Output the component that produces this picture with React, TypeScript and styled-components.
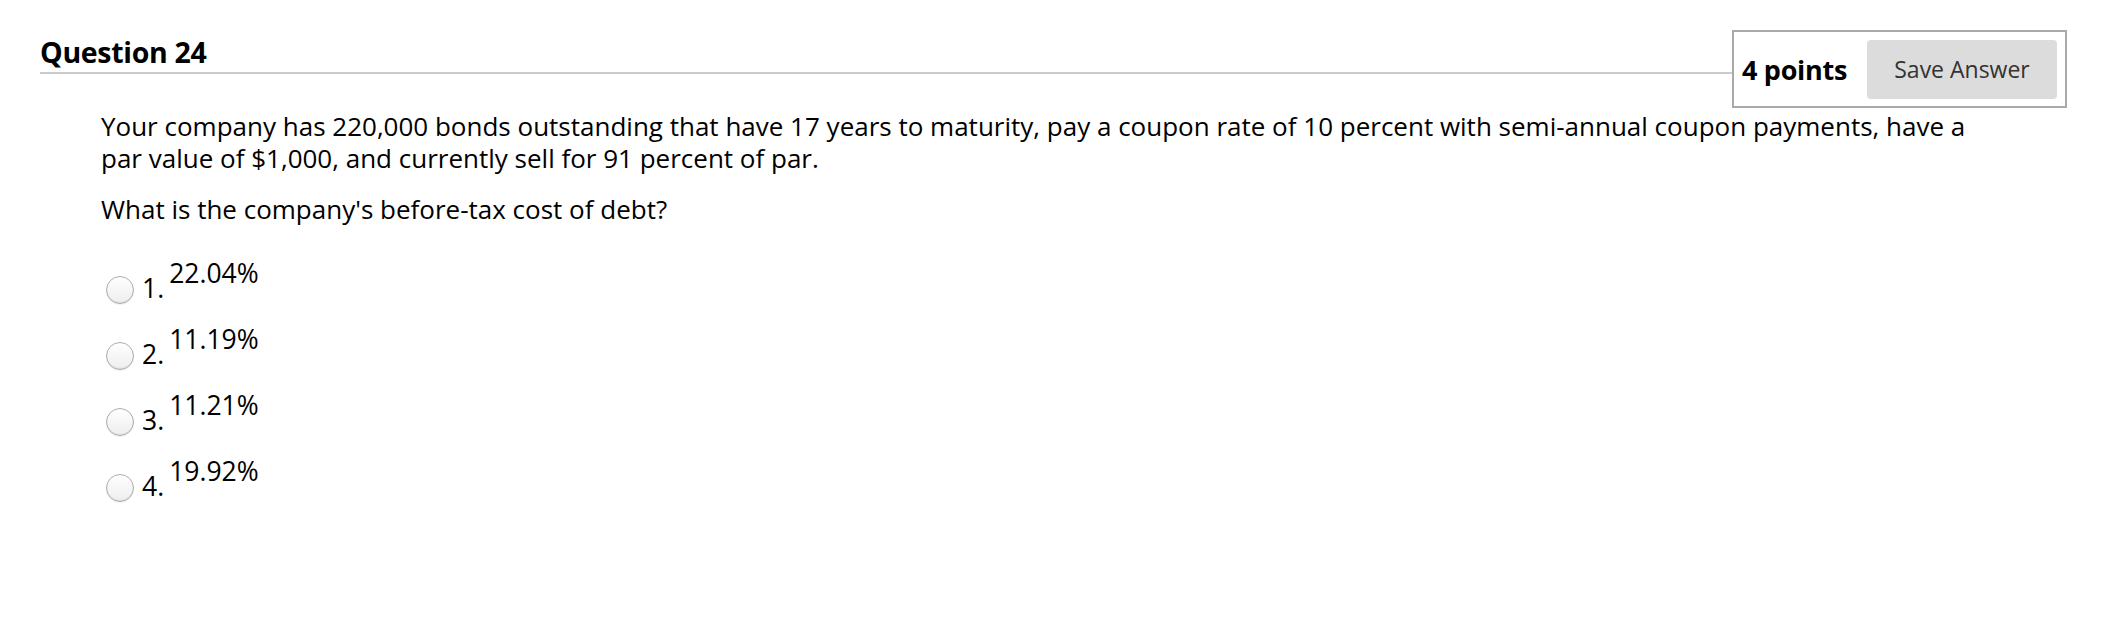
import React from "react";
import styled, { createGlobalStyle } from "styled-components";

const GlobalStyle = createGlobalStyle`
  html, body {
    margin: 0;
    padding: 0;
    background: #ffffff;
  }
  body {
    font-family: "Open Sans", "Liberation Sans", Arial, sans-serif;
    color: #000;
  }
`;

const answers = ["22.04%", "11.19%", "11.21%", "19.92%"];

const App = () => {
  return (
    <>
      <GlobalStyle />
      <Page>
        <Header>
          <TitleBar>
            <Title>Question 24</Title>
          </TitleBar>
          <PointsBox>
            <Points>4 points</Points>
            <SaveButton>Save Answer</SaveButton>
          </PointsBox>
        </Header>
        <Body>
          <QuestionText>
            Your company has 220,000 bonds outstanding that have 17 years to maturity, pay a coupon rate of 10
            percent with semi-annual coupon payments, have a par value of $1,000, and currently sell for 91 percent
            of par.
          </QuestionText>
          <QuestionText>What is the company's before-tax cost of debt?</QuestionText>
          <Options>
            {answers.map((a, i) => (
              <OptionRow key={a}>
                <Radio />
                <OptionNumber>{i + 1}.</OptionNumber>
                <OptionText>{a}</OptionText>
              </OptionRow>
            ))}
          </Options>
        </Body>
      </Page>
    </>
  );
};

export default App;

const Page = styled.div`
  width: 2102px;
  height: 640px;
  box-sizing: border-box;
  padding: 30px 35px 0 40px;
`;

const Header = styled.div`
  display: flex;
  align-items: flex-start;
`;

const TitleBar = styled.div`
  flex: 1;
  margin-top: 5px;
  padding-bottom: 3px;
  border-bottom: 2px solid #cbcbcb;
`;

const Title = styled.h2`
  margin: 0;
  font-size: 28.5px;
  line-height: 34px;
  font-weight: 700;
  letter-spacing: -0.3px;
`;

const PointsBox = styled.div`
  display: flex;
  align-items: center;
  gap: 20px;
  height: 78px;
  box-sizing: border-box;
  padding: 0 8px;
  border: 2px solid #a9a9a9;
`;

const Points = styled.span`
  font-size: 27px;
  font-weight: 700;
  letter-spacing: -0.3px;
`;

const SaveButton = styled.div`
  width: 190px;
  height: 59px;
  display: flex;
  align-items: center;
  justify-content: center;
  background: #dcdcdc;
  border-radius: 4px;
  color: #333;
  font-size: 23px;
`;

const Body = styled.div`
  padding: 2px 0 0 61px;
`;

const QuestionText = styled.p`
  width: 1895px;
  margin: 0 0 19px;
  font-size: 26px;
  line-height: 32px;
`;

const Options = styled.div`
  display: flex;
  flex-direction: column;
  gap: 19px;
  margin-top: 32px;
  padding-left: 5px;
`;

const OptionRow = styled.div`
  display: flex;
  align-items: flex-start;
  font-size: 26.5px;
  line-height: 32px;
`;

const Radio = styled.span`
  flex-shrink: 0;
  width: 28px;
  height: 28px;
  margin: 19px 8px 0 0;
  border-radius: 50%;
  border: 1px solid #acacac;
  background: linear-gradient(#ffffff, #eeeeee);
  box-shadow: inset 0 -1px 1px rgba(0, 0, 0, 0.08), 0 1px 0 rgba(0, 0, 0, 0.05);
  box-sizing: border-box;
`;

const OptionNumber = styled.span`
  margin-top: 15px;
  margin-right: 5px;
`;

const OptionText = styled.span``;
